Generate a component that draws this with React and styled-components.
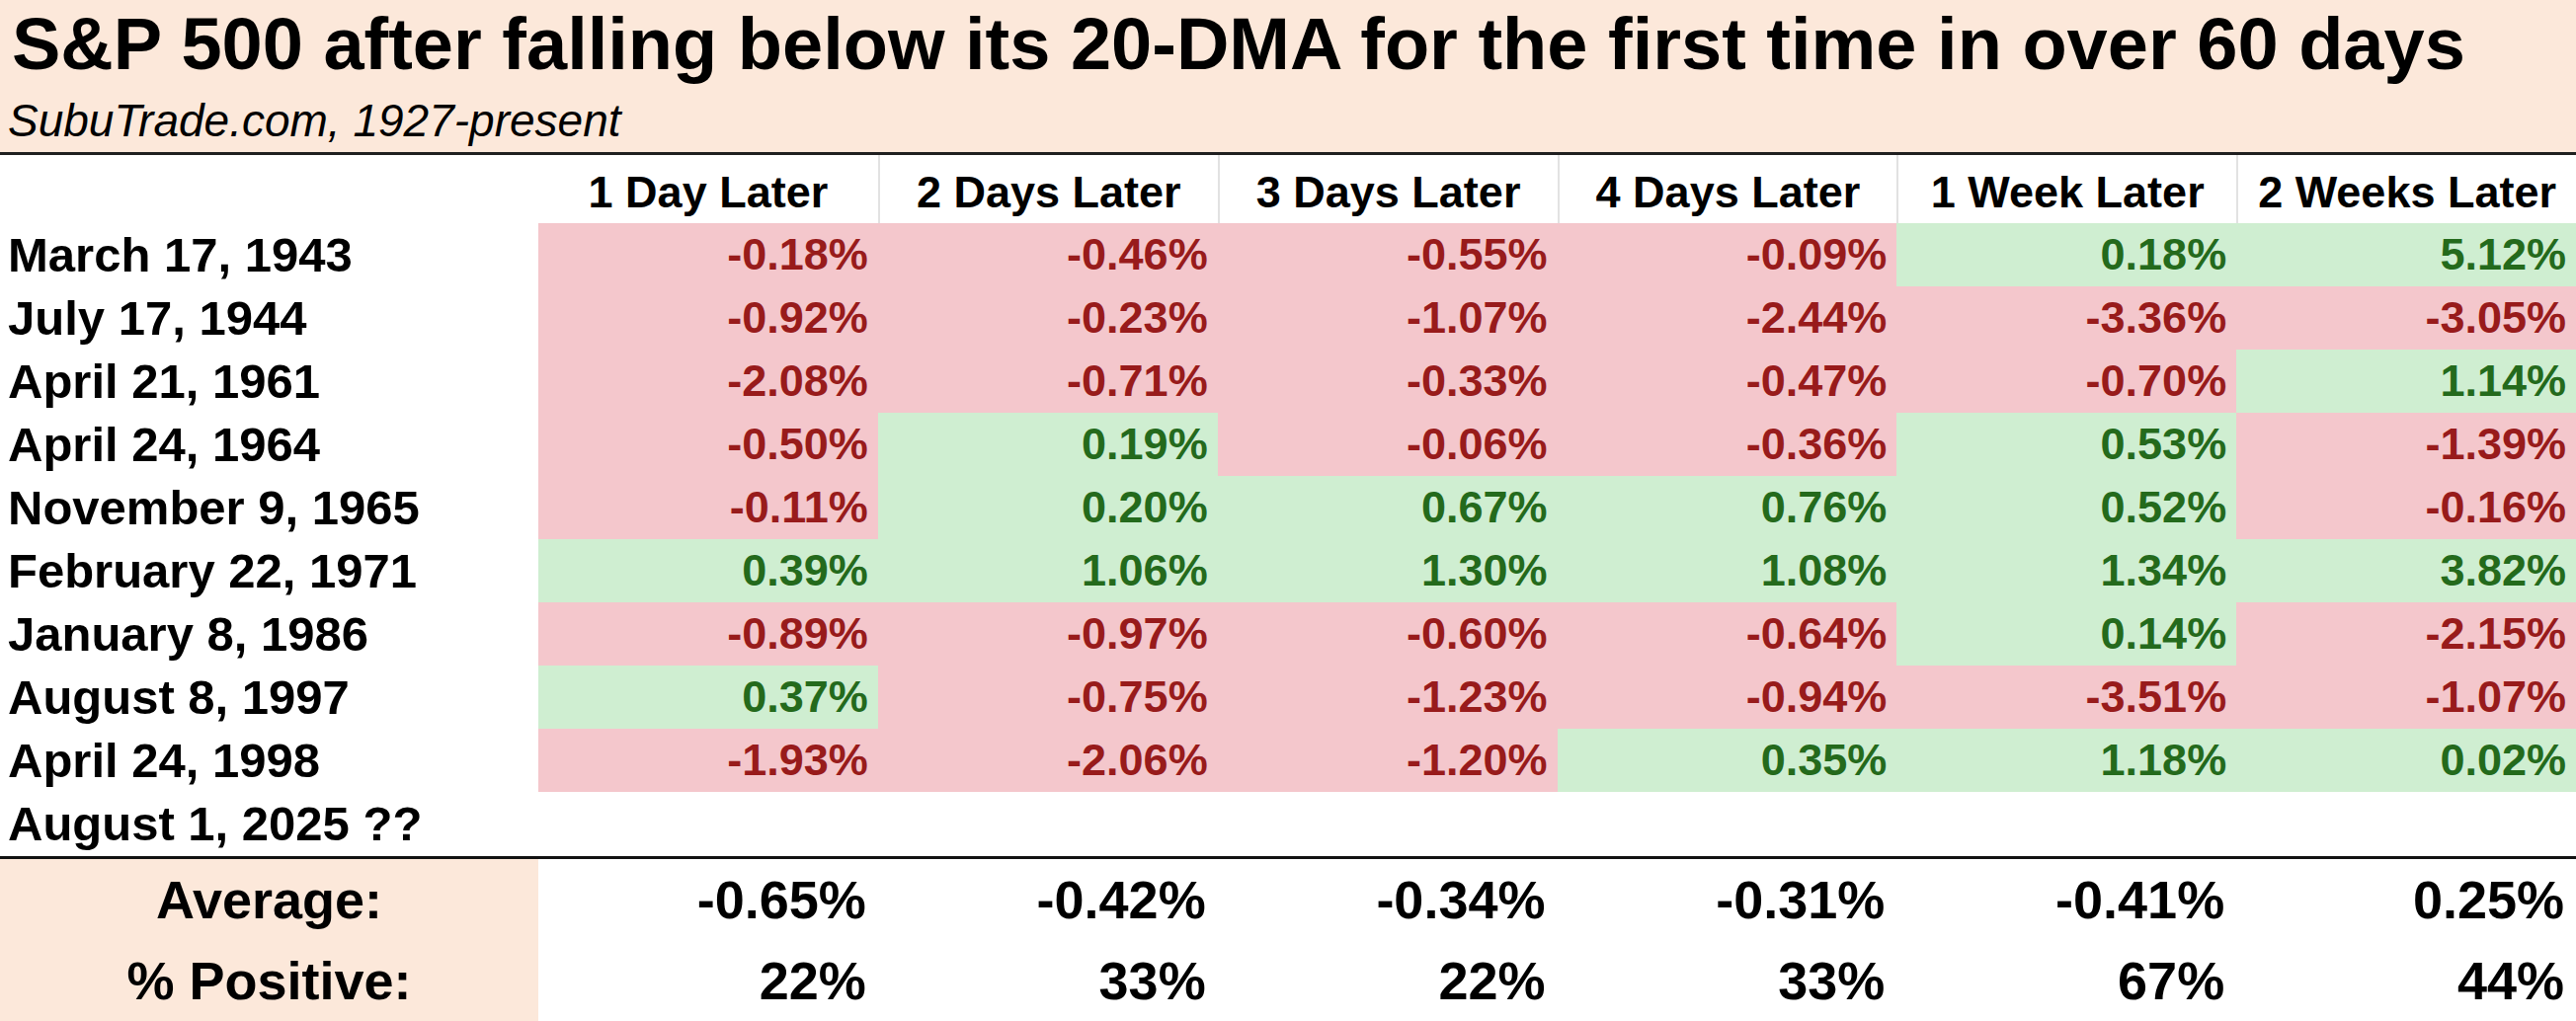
import React from 'react';
import styled, { createGlobalStyle } from 'styled-components';

const columns = ['1 Day Later', '2 Days Later', '3 Days Later', '4 Days Later', '1 Week Later', '2 Weeks Later'];

const rows = [
  ['March 17, 1943', [-0.18, -0.46, -0.55, -0.09, 0.18, 5.12]],
  ['July 17, 1944', [-0.92, -0.23, -1.07, -2.44, -3.36, -3.05]],
  ['April 21, 1961', [-2.08, -0.71, -0.33, -0.47, -0.7, 1.14]],
  ['April 24, 1964', [-0.5, 0.19, -0.06, -0.36, 0.53, -1.39]],
  ['November 9, 1965', [-0.11, 0.2, 0.67, 0.76, 0.52, -0.16]],
  ['February 22, 1971', [0.39, 1.06, 1.3, 1.08, 1.34, 3.82]],
  ['January 8, 1986', [-0.89, -0.97, -0.6, -0.64, 0.14, -2.15]],
  ['August 8, 1997', [0.37, -0.75, -1.23, -0.94, -3.51, -1.07]],
  ['April 24, 1998', [-1.93, -2.06, -1.2, 0.35, 1.18, 0.02]],
];

const averages = ['-0.65%', '-0.42%', '-0.34%', '-0.31%', '-0.41%', '0.25%'];
const positives = ['22%', '33%', '22%', '33%', '67%', '44%'];

const GlobalStyle = createGlobalStyle`
  html, body {
    margin: 0;
    padding: 0;
    background: #ffffff;
  }
  body {
    font-family: "Liberation Sans", Arial, sans-serif;
    color: #000;
  }
`;

const Page = styled.div`
  width: 2608px;
  height: 1034px;
  overflow: hidden;
  background: #fff;
`;

const Banner = styled.header`
  background: #fce8da;
  padding: 8px 0 9px 12px;
  border-bottom: 3px solid #1f1f1f;
`;

const Title = styled.h1`
  margin: 0;
  font-size: 74px;
  line-height: 73px;
  font-weight: 700;
  white-space: nowrap;
`;

const Subtitle = styled.p`
  margin: 19px 0 0 -4px;
  font-size: 46px;
  line-height: 45px;
  font-style: italic;
  white-space: nowrap;
`;

const Row = styled.div`
  display: grid;
  grid-template-columns: 545px repeat(6, 1fr);
  height: ${(p) => p.$h}px;
  line-height: ${(p) => p.$h}px;
  font-weight: 700;
`;

const HeadCell = styled.div`
  text-align: center;
  font-size: 45px;
  padding-top: 3px;
  border-left: ${(p) => (p.$first ? 'none' : '2px solid #e2e2e2')};
  white-space: nowrap;
`;

const Label = styled.div`
  font-size: 49px;
  padding-left: 8px;
  white-space: nowrap;
`;

const Value = styled.div`
  text-align: right;
  font-size: 45px;
  padding-right: 10px;
  background: ${(p) => (p.$up ? '#cfeed1' : '#f4c7cc')};
  color: ${(p) => (p.$up ? '#246a1c' : '#981b1b')};
`;

const Rule = styled.div`
  height: 3px;
  background: #111;
`;

const SummaryLabel = styled.div`
  background: #fce8da;
  text-align: center;
  font-size: 54px;
`;

const SummaryValue = styled.div`
  text-align: right;
  font-size: 54px;
  padding-right: 12px;
`;

const fmt = (v) => `${v.toFixed(2)}%`;

export default function App() {
  return (
    <Page>
      <GlobalStyle />
      <Banner>
        <Title>S&amp;P 500 after falling below its 20-DMA for the first time in over 60 days</Title>
        <Subtitle>SubuTrade.com, 1927-present</Subtitle>
      </Banner>

      <Row $h={69}>
        <div />
        {columns.map((c, i) => (
          <HeadCell key={c} $first={i === 0}>
            {c}
          </HeadCell>
        ))}
      </Row>

      {rows.map(([date, vals]) => (
        <Row key={date} $h={64}>
          <Label>{date}</Label>
          {vals.map((v, i) => (
            <Value key={i} $up={v >= 0}>
              {fmt(v)}
            </Value>
          ))}
        </Row>
      ))}

      <Row $h={65}>
        <Label>August 1, 2025 ??</Label>
      </Row>

      <Rule />

      <Row $h={82}>
        <SummaryLabel>Average:</SummaryLabel>
        {averages.map((a, i) => (
          <SummaryValue key={i}>{a}</SummaryValue>
        ))}
      </Row>
      <Row $h={82}>
        <SummaryLabel>% Positive:</SummaryLabel>
        {positives.map((a, i) => (
          <SummaryValue key={i}>{a}</SummaryValue>
        ))}
      </Row>
    </Page>
  );
}
